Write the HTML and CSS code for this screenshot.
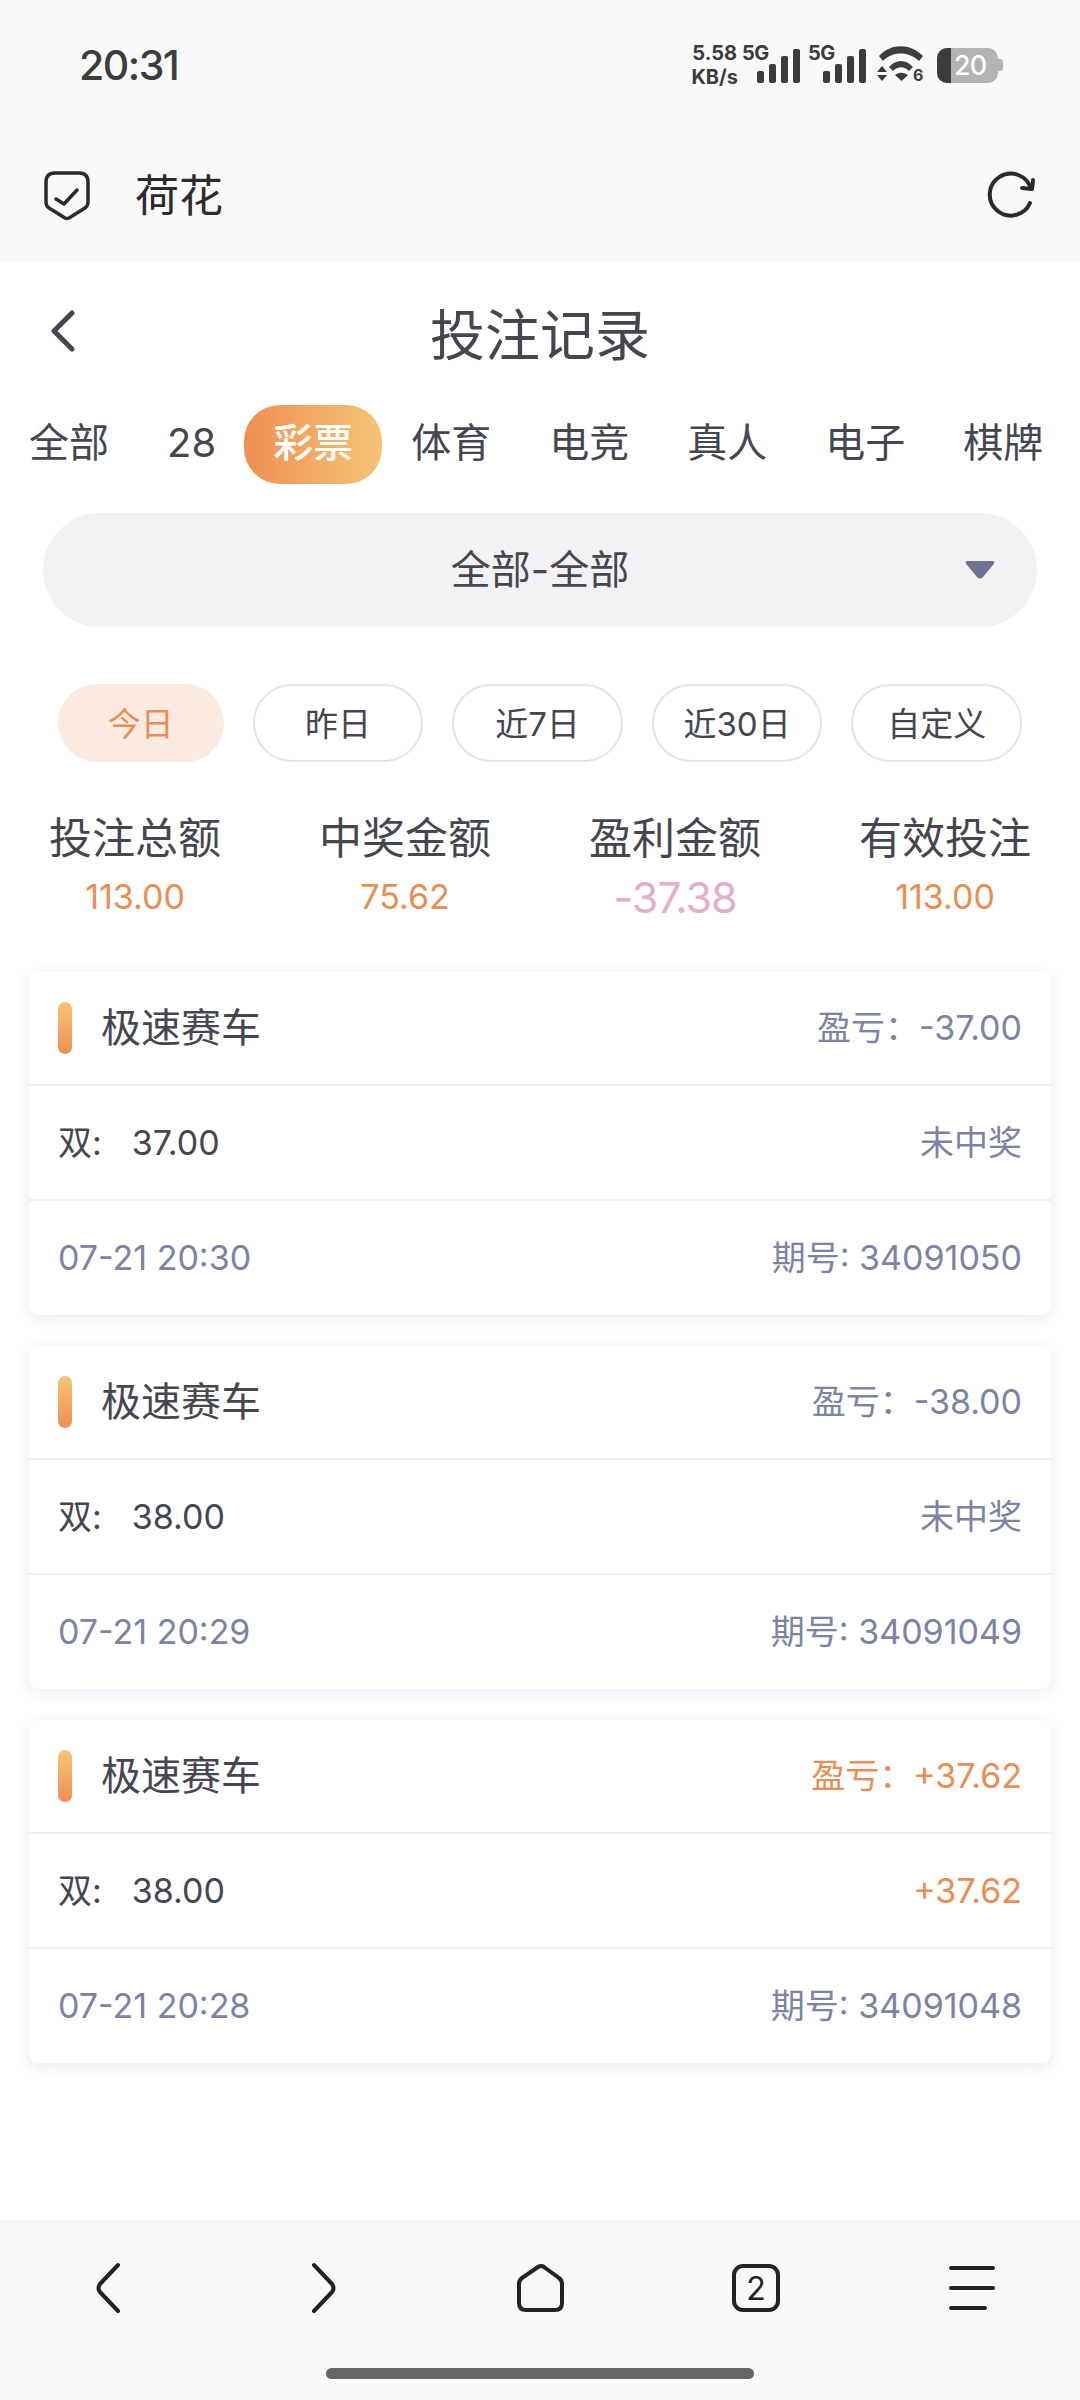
FILE: index.html
```html
<!DOCTYPE html>
<html lang="zh-CN">
    <head>
        <meta charset="UTF-8">
        <meta name="viewport" content="width=device-width, initial-scale=1.0">
        <title>投注记录</title>
        <link rel="stylesheet" href="styles.css">
    </head>
    <body>
        <div id="container">
            <div class="top-area">
                <div class="status-bar">
                    <span class="clock">20:31</span>
                    <div class="status-icons">
                        <div class="speed"><span>5.58</span><span>KB/s</span></div>
                        <div class="signal">
                            <span class="net">5G</span>
                            <svg class="bars" width="44" height="34" viewBox="0 0 44 34"><rect x="0" y="22" width="7" height="12" rx="2"/><rect x="12" y="15" width="7" height="19" rx="2"/><rect x="24" y="7" width="7" height="27" rx="2"/><rect x="36" y="0" width="7" height="34" rx="2"/></svg>
                        </div>
                        <div class="signal">
                            <span class="net">5G</span>
                            <svg class="bars" width="44" height="34" viewBox="0 0 44 34"><rect x="0" y="22" width="7" height="12" rx="2"/><rect x="12" y="15" width="7" height="19" rx="2"/><rect x="24" y="7" width="7" height="27" rx="2"/><rect x="36" y="0" width="7" height="34" rx="2"/></svg>
                        </div>
                        <svg class="wifi" width="50" height="38" viewBox="0 0 50 38">
                            <path d="M2 10C14 -3 33 -3 46 10L42 15C32 5 15 5 6 15Z"/>
                            <path d="M12 21C19 13 29 13 36 21L32 25C27 20 21 20 16 25Z"/>
                            <path d="M18 29C22 26 26 26 31 29L24.500 35Z"/>
                            <path d="M5 20L10 26H0Z"/>
                            <path d="M5 35L0 29H10Z"/>
                            <text x="36" y="35" class="wifi-num">6</text>
                        </svg>
                        <div class="battery">
                            <div class="battery-body"><span class="battery-fill"></span><span class="battery-num">20</span></div>
                            <span class="battery-nub"></span>
                        </div>
                    </div>
                </div>
                <div class="browser-bar">
                    <svg class="shield" width="46" height="50" viewBox="0 0 46 50" fill="none">
                        <path d="M11 2H35Q44 2 44 11V31Q44 35 41 37L25 47Q23 48 21 47L5 37Q2 35 2 31V11Q2 2 11 2Z"/>
                        <path d="M12 28L20 33L33 19"/>
                    </svg>
                    <span class="site-name">荷花</span>
                    <svg class="reload" width="50" height="50" viewBox="0 0 50 50" fill="none">
                        <path d="M44 32A21 21 0 1 1 45 18"/>
                        <path d="M47 9L46 18L36 17"/>
                    </svg>
                </div>
            </div>

            <div class="content">
                <div class="page-header">
                    <svg class="back" width="28" height="42" viewBox="0 0 28 42" fill="none"><path d="M24 3L6 21L24 39"/></svg>
                    <h1>投注记录</h1>
                </div>

                <div class="tabs">
                    <div class="tab">全部</div>
                    <div class="tab">28</div>
                    <div class="tab active">彩票</div>
                    <div class="tab">体育</div>
                    <div class="tab">电竞</div>
                    <div class="tab">真人</div>
                    <div class="tab">电子</div>
                    <div class="tab">棋牌</div>
                </div>

                <div class="select-box">
                    <span>全部-全部</span>
                    <svg class="caret" width="30" height="18" viewBox="0 0 30 18"><path d="M3 0H27Q31 0 28 4L18 16Q15 19 12 16L2 4Q-1 0 3 0Z"/></svg>
                </div>

                <div class="chips">
                    <div class="chip chip-on">今日</div>
                    <div class="chip">昨日</div>
                    <div class="chip">近7日</div>
                    <div class="chip">近30日</div>
                    <div class="chip">自定义</div>
                </div>

                <div class="stats">
                    <div class="stat"><p>投注总额</p><span class="stat-val">113.00</span></div>
                    <div class="stat"><p>中奖金额</p><span class="stat-val">75.62</span></div>
                    <div class="stat"><p>盈利金额</p><span class="stat-val loss">-37.38</span></div>
                    <div class="stat"><p>有效投注</p><span class="stat-val">113.00</span></div>
                </div>

                <div class="card">
                    <div class="row">
                        <div class="game"><span class="mark"></span>极速赛车</div>
                        <span class="muted">盈亏：-37.00</span>
                    </div>
                    <div class="row">
                        <div class="bet">双:<span>37.00</span></div>
                        <span class="muted">未中奖</span>
                    </div>
                    <div class="row">
                        <span class="muted">07-21 20:30</span>
                        <span class="muted">期号: 34091050</span>
                    </div>
                </div>

                <div class="card">
                    <div class="row">
                        <div class="game"><span class="mark"></span>极速赛车</div>
                        <span class="muted">盈亏：-38.00</span>
                    </div>
                    <div class="row">
                        <div class="bet">双:<span>38.00</span></div>
                        <span class="muted">未中奖</span>
                    </div>
                    <div class="row">
                        <span class="muted">07-21 20:29</span>
                        <span class="muted">期号: 34091049</span>
                    </div>
                </div>

                <div class="card">
                    <div class="row">
                        <div class="game"><span class="mark"></span>极速赛车</div>
                        <span class="win">盈亏：+37.62</span>
                    </div>
                    <div class="row">
                        <div class="bet">双:<span>38.00</span></div>
                        <span class="win">+37.62</span>
                    </div>
                    <div class="row">
                        <span class="muted">07-21 20:28</span>
                        <span class="muted">期号: 34091048</span>
                    </div>
                </div>
            </div>

            <div class="bottom-nav">
                <div class="nav-icons">
                    <svg width="26" height="52" viewBox="0 0 26 52" fill="none"><path d="M23 3L5 22Q2 26 5 30L23 49"/></svg>
                    <svg width="26" height="52" viewBox="0 0 26 52" fill="none"><path d="M3 3L21 22Q24 26 21 30L3 49"/></svg>
                    <svg width="51" height="52" viewBox="0 0 51 52" fill="none"><path d="M23 5Q26 3 29 5L44 16Q47 18 47 22V41Q47 48 40 48H11Q4 48 4 41V22Q4 18 7 16Z"/></svg>
                    <div class="tab-count">2</div>
                    <div class="menu-icon"><span></span><span></span><span class="short"></span></div>
                </div>
                <div class="home-bar"></div>
            </div>
        </div>
    </body>
</html>
```

FILE: styles.css
```css
* {
    box-sizing: border-box;
}

body {
    font-family: Inter, "Noto Sans CJK SC", sans-serif;
    background-color: #fff;
    color: #45464f;
    margin: 0;
    padding: 0;
}

#container {
    width: 1080px;
    height: 2400px;
    display: flex;
    flex-direction: column;
    overflow: hidden;
}

/* status bar + browser bar */
.top-area {
    background-color: #f9f9f9;
    height: 262px;
    color: #3c3c3c;
}

.status-bar {
    height: 130px;
    padding: 0 77px 0 79px;
    display: flex;
    justify-content: space-between;
    align-items: center;
}

.clock {
    font-size: 41px;
    font-weight: 500;
    letter-spacing: -1.500px;
}

.status-icons {
    display: flex;
    align-items: center;
}

.speed {
    display: flex;
    flex-direction: column;
    align-items: center;
    font-size: 20px;
    font-weight: 700;
    line-height: 24px;
    margin-right: 4px;
}

.signal {
    position: relative;
    display: flex;
    align-items: flex-end;
    width: 59px;
    height: 36px;
    justify-content: flex-end;
    margin-right: 7px;
}

.net {
    position: absolute;
    left: 0;
    top: -4px;
    font-size: 20px;
    font-weight: 700;
    line-height: 20px;
    letter-spacing: -0.500px;
}

.bars {
    fill: #3c3c3c;
}

.wifi {
    fill: #3c3c3c;
    margin-left: 3px;
    margin-right: 10px;
}

.wifi-num {
    font-size: 16px;
    font-weight: 700;
}

.battery {
    display: flex;
    align-items: center;
}

.battery-body {
    width: 61px;
    height: 35px;
    background-color: #b3b3b3;
    border-radius: 10px;
    display: flex;
    align-items: center;
    overflow: hidden;
}

.battery-fill {
    width: 14px;
    height: 100%;
    background-color: #3c3c3c;
}

.battery-num {
    color: #fff;
    font-size: 27px;
    font-weight: 500;
    margin-left: 3px;
    letter-spacing: -1px;
}

.battery-nub {
    width: 5px;
    height: 12px;
    border-radius: 0 3px 3px 0;
    background-color: #b3b3b3;
}

.browser-bar {
    height: 132px;
    padding: 0 44px;
    display: flex;
    align-items: center;
}

.shield path {
    stroke: #2b2b2b;
    stroke-width: 3.500;
    stroke-linejoin: round;
    stroke-linecap: round;
}

.site-name {
    font-size: 44px;
    color: #2b2b2b;
    margin-left: 45px;
    padding-bottom: 6px;
}

.reload {
    margin-left: auto;
}

.reload path {
    stroke: #2b2b2b;
    stroke-width: 4;
    stroke-linecap: round;
    stroke-linejoin: round;
}

/* main page */
.content {
    flex: 1;
    background-color: #fff;
}

.page-header {
    height: 143px;
    position: relative;
    display: flex;
    align-items: center;
    justify-content: center;
}

.back {
    position: absolute;
    left: 48px;
    top: 48px;
}

.back path {
    stroke: #45464f;
    stroke-width: 5;
    stroke-linecap: round;
    stroke-linejoin: round;
}

h1 {
    font-size: 55px;
    font-weight: 400;
    margin: 0;
    padding-bottom: 6px;
}

.tabs {
    display: flex;
    height: 79px;
}

.tab {
    padding: 0 29px;
    font-size: 40px;
    line-height: 76px;
    flex-shrink: 0;
}

.tab.active {
    color: #fff;
    font-weight: 500;
    margin-left: -1px;
    border-radius: 36px;
    background: linear-gradient(90deg, #ef8f53, #f5c474);
}

.select-box {
    margin: 29px 43px 0;
    height: 114px;
    padding-bottom: 6px;
    border-radius: 57px;
    background-color: #f2f2f5;
    font-size: 40px;
    position: relative;
    display: flex;
    align-items: center;
    justify-content: center;
}

.caret {
    fill: #6d7291;
    position: absolute;
    right: 42px;
    top: 48px;
}

.chips {
    display: flex;
    gap: 29px;
    padding: 0 58px;
    margin-top: 57px;
}

.chip {
    width: 171px;
    height: 78px;
    padding-bottom: 3px;
    border: 2px solid #e3e3e3;
    border-radius: 39px;
    font-size: 33px;
    display: flex;
    align-items: center;
    justify-content: center;
}

.chip-on {
    width: 166px;
    border: none;
    background-color: #fbeadf;
    color: #e98e52;
}

.stats {
    display: grid;
    grid-template-columns: repeat(4, 1fr);
    margin-top: 46px;
    text-align: center;
}

.stat p {
    margin: 0;
    font-size: 43px;
    line-height: 60px;
}

.stat-val {
    display: block;
    font-size: 34px;
    line-height: 58px;
    color: #e98e52;
}

.stat-val.loss {
    color: #e3aec8;
    font-size: 43px;
    letter-spacing: -1px;
}

.card {
    margin: 0 29px 31px;
    height: 343px;
    background-color: #fff;
    border-radius: 10px;
    box-shadow: 0 3px 14px rgba(80, 90, 130, 0.13);
}

.stats + .card {
    margin-top: 46px;
}

.row {
    height: 115px;
    padding: 0 29px;
    display: flex;
    justify-content: space-between;
    align-items: center;
    font-size: 34px;
    line-height: 44px;
    border-bottom: 2px solid #f0f0f2;
}

.row:first-child {
    height: 114px;
}

.row:last-child {
    height: 114px;
    border-bottom: none;
}

.game {
    display: flex;
    align-items: center;
    font-size: 40px;
}

.mark {
    width: 14px;
    height: 52px;
    border-radius: 7px;
    margin-right: 29px;
    background: linear-gradient(180deg, #f5c474, #ef8f53);
}

.bet span {
    margin-left: 30px;
}

.muted {
    color: #7c83a5;
}

.win {
    color: #e98e52;
}

/* bottom nav */
.bottom-nav {
    height: 180px;
    background-color: #f8f8f8;
}

.nav-icons {
    height: 136px;
    display: grid;
    grid-template-columns: repeat(5, 1fr);
    justify-items: center;
    align-items: center;
}

.nav-icons svg path {
    stroke: #222;
    stroke-width: 4;
    stroke-linecap: round;
    stroke-linejoin: round;
}

.tab-count {
    width: 48px;
    height: 48px;
    border: 4px solid #222;
    border-radius: 11px;
    color: #222;
    font-size: 32px;
    display: flex;
    align-items: center;
    justify-content: center;
}

.menu-icon {
    width: 46px;
    display: flex;
    flex-direction: column;
    gap: 16px;
}

.menu-icon span {
    height: 4px;
    border-radius: 2px;
    background-color: #222;
}

.menu-icon span.short {
    width: 38px;
}

.home-bar {
    width: 428px;
    height: 11px;
    margin: 12px auto 0;
    border-radius: 6px;
    background-color: #666;
}
```
